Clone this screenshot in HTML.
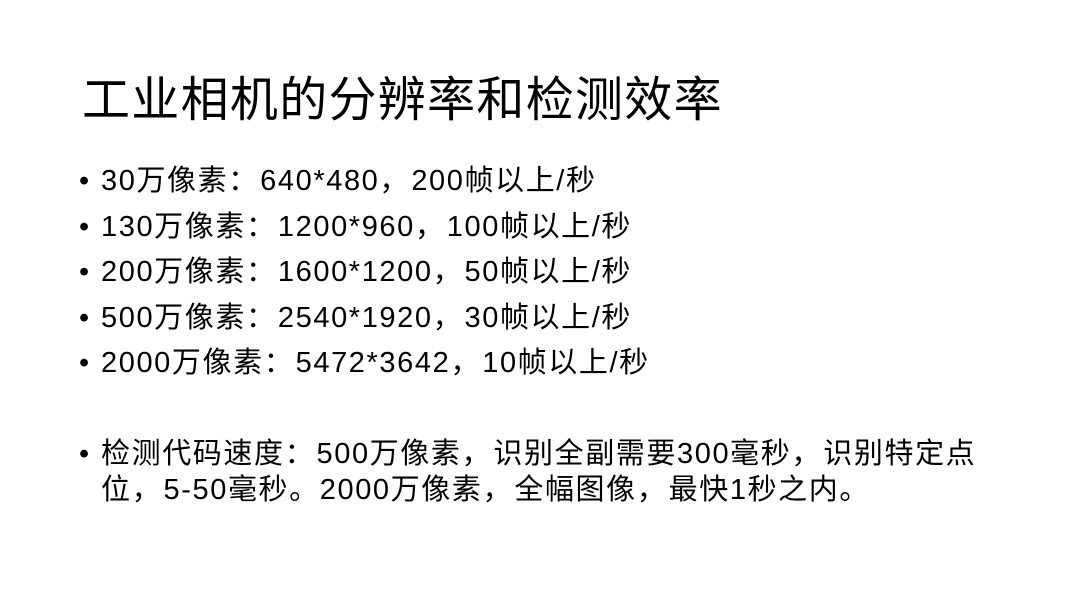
<!DOCTYPE html>
<html><head><meta charset="utf-8"><style>
body{margin:0;width:1076px;height:606px;background:#fff;overflow:hidden;font-family:"Liberation Sans","Noto Sans CJK SC",sans-serif;color:#000;position:relative}
.t{position:absolute;left:82px;top:60px;font-size:48px;white-space:nowrap;letter-spacing:1.3px}
.b{position:absolute;left:101px;font-size:29px;white-space:nowrap;line-height:36px;letter-spacing:1.6px}
.b:before{content:"•";position:absolute;left:-22px}
.p{display:inline-block;width:1.1em;text-align:left}
</style></head><body>
<div class="t">工业相机的分辨率和检测效率</div>
<div class="b" style="top:163px">30万像素<span class="p">：</span>640*480<span class="p">，</span>200帧以上/秒</div>
<div class="b" style="top:209px">130万像素<span class="p">：</span>1200*960<span class="p">，</span>100帧以上/秒</div>
<div class="b" style="top:254px">200万像素<span class="p">：</span>1600*1200<span class="p">，</span>50帧以上/秒</div>
<div class="b" style="top:300px">500万像素<span class="p">：</span>2540*1920<span class="p">，</span>30帧以上/秒</div>
<div class="b" style="top:345px">2000万像素<span class="p">：</span>5472*3642<span class="p">，</span>10帧以上/秒</div>
<div class="b" style="top:436px">检测代码速度<span class="p">：</span>500万像素<span class="p">，</span>识别全副需要300毫秒<span class="p">，</span>识别特定点<br>位<span class="p">，</span>5-50毫秒。2000万像素<span class="p">，</span>全幅图像<span class="p">，</span>最快1秒之内。</div>
</body></html>
